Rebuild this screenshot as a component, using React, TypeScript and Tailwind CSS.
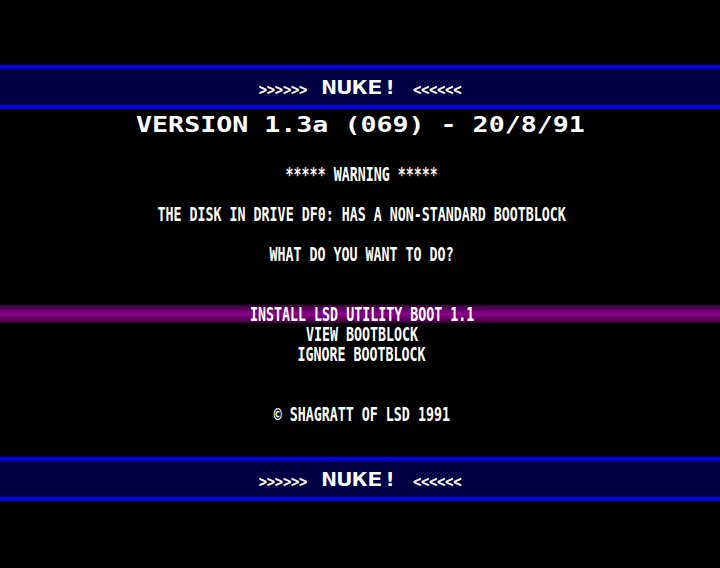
const mono = { fontFamily: '"DejaVu Sans Mono", "Liberation Mono", monospace' };

const NukeBar = () => (
  <div className="h-[44px] border-y-4 border-[#0000ee] bg-[#000044] flex items-center justify-center text-white" style={mono}>
    <span className="inline-block text-[14px] font-bold leading-none tracking-[-0.4px] mt-[3px] scale-y-[1.15]">&gt;&gt;&gt;&gt;&gt;&gt;</span>
    <span className="w-[106px] flex justify-center">
      <span className="inline-block text-[19px] font-bold leading-none scale-x-[1.33]">NUKE!</span>
    </span>
    <span className="inline-block text-[14px] font-bold leading-none tracking-[-0.4px] mt-[3px] scale-y-[1.15]">&lt;&lt;&lt;&lt;&lt;&lt;</span>
  </div>
);

const Line = ({ children, className = "" }: { children: React.ReactNode; className?: string }) => (
  <div className={`h-[20px] flex items-center justify-center pl-[4px] ${className}`}>
    <span className="inline-block whitespace-pre text-[19px] font-semibold leading-none text-white scale-x-[0.7]" style={mono}>
      {children}
    </span>
  </div>
);

const menu = ["INSTALL LSD UTILITY BOOT 1.1", "VIEW BOOTBLOCK", "IGNORE BOOTBLOCK"];

export default function App() {
  return (
    <div className="w-[720px] h-[568px] bg-black overflow-hidden flex flex-col">
      <div className="h-[65px] shrink-0" />
      <NukeBar />
      <div className="h-[32px] flex items-center justify-center">
        <span className="inline-block whitespace-pre text-[22px] font-bold leading-none text-white scale-x-[1.21]" style={mono}>
          VERSION 1.3a (069) - 20/8/91
        </span>
      </div>

      <Line className="mt-[23px]">***** WARNING *****</Line>
      <Line className="mt-[20px]">THE DISK IN DRIVE DF0: HAS A NON-STANDARD BOOTBLOCK</Line>
      <Line className="mt-[20px]">WHAT DO YOU WANT TO DO?</Line>

      <div className="mt-[41px] flex flex-col">
        {menu.map((item, i) =>
          i === 0 ? (
            <Line key={item} className="!h-[18px] bg-linear-to-b from-[#380038] via-[#8e008e] to-[#380038]">
              {item}
            </Line>
          ) : (
            <Line key={item} className={i === 1 ? "mt-[1px]" : ""}>
              {item}
            </Line>
          )
        )}
      </div>

      <Line className="mt-[40px]">© SHAGRATT OF LSD 1991</Line>

      <div className="h-[33px] shrink-0" />
      <NukeBar />
    </div>
  );
}
